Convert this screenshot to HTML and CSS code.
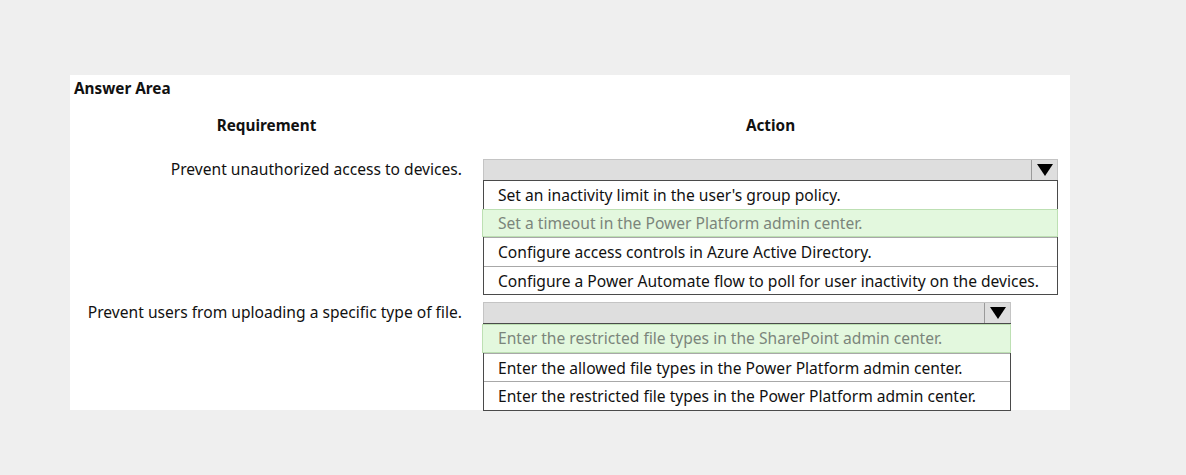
FILE: index.html
```html
<!DOCTYPE html>
<html lang="en">
<head>
<meta charset="utf-8">
<title>Answer Area</title>
<link rel="stylesheet" href="styles.css">
</head>
<body>
<div class="panel">
  <div class="title">Answer Area</div>
  <div class="grid heads">
    <div class="head">Requirement</div>
    <div class="head action-head">Action</div>
  </div>
  <div class="grid row">
    <div class="label">Prevent unauthorized access to devices.</div>
    <div class="dd dd-wide">
      <div class="dd-bar"><span class="dd-arrow"><svg width="16" height="12" viewBox="0 0 16 12"><polygon points="0,0 16,0 8,12" fill="#000"/></svg></span></div>
      <ul class="dd-list">
        <li class="opt">Set an inactivity limit in the user's group policy.</li>
        <li class="opt sel">Set a timeout in the Power Platform admin center.</li>
        <li class="opt">Configure access controls in Azure Active Directory.</li>
        <li class="opt">Configure a Power Automate flow to poll for user inactivity on the devices.</li>
      </ul>
    </div>
  </div>
  <div class="grid row row2">
    <div class="label">Prevent users from uploading a specific type of file.</div>
    <div class="dd dd-narrow">
      <div class="dd-bar"><span class="dd-arrow"><svg width="16" height="12" viewBox="0 0 16 12"><polygon points="0,0 16,0 8,12" fill="#000"/></svg></span></div>
      <ul class="dd-list">
        <li class="opt sel">Enter the restricted file types in the SharePoint admin center.</li>
        <li class="opt">Enter the allowed file types in the Power Platform admin center.</li>
        <li class="opt">Enter the restricted file types in the Power Platform admin center.</li>
      </ul>
    </div>
  </div>
</div>
</body>
</html>
```

FILE: styles.css
```css
html, body {
  margin: 0;
  padding: 0;
}
body {
  background: #efefef;
  font-family: "Noto Sans", "Open Sans", sans-serif;
  color: #111;
  font-size: 15.6px;
  padding: 75px 0 0 70px;
  height: 475px;
  box-sizing: border-box;
}
.panel {
  background: #fff;
  width: 1000px;
  height: 335px;
  padding-top: 3px;
  box-sizing: border-box;
}
.title {
  font-weight: bold;
  font-size: 15.3px;
  line-height: 20px;
  padding-left: 4px;
}
.grid {
  display: grid;
  grid-template-columns: 413px 1fr;
}
.heads {
  margin-top: 17px;
  grid-template-columns: 393px 20px 575px;
}
.head {
  font-weight: bold;
  font-size: 15.3px;
  text-align: center;
  line-height: 20px;
}
.action-head {
  grid-column: 3;
}
.row {
  margin-top: 24px;
  align-items: start;
}
.row2 {
  margin-top: 7px;
}
.label {
  text-align: right;
  padding-right: 21px;
  line-height: 20px;
}
.dd-wide { width: 575px; }
.dd-narrow { width: 528px; }
.dd-bar {
  height: 21px;
  box-sizing: border-box;
  background: #dedede;
  border: 1px solid #c4c4c4;
  border-bottom: none;
  display: flex;
  justify-content: flex-end;
}
.dd-arrow {
  width: 25px;
  border-left: 1px solid #9a9a9a;
  display: flex;
  align-items: center;
  justify-content: center;
}
.dd-list {
  list-style: none;
  margin: 0;
  padding: 0;
  border: 1px solid #4a4a4a;
  background: #fff;
}
.opt {
  height: 27.5px;
  line-height: 28px;
  padding-left: 14px;
  white-space: nowrap;
  border-top: 1px solid #a8a8a8;
}
.opt:first-child {
  border-top: none;
}
.opt.sel {
  background: #e3f8de;
  color: #7b857b;
  border: 1px solid #bde0b3;
  margin: 0 -1px 0 -2px;
  padding-left: 15px;
  height: 26.5px;
  line-height: 27px;
}
.opt.sel + .opt {
  border-top: 1px solid #a8a8a8;
}
```
